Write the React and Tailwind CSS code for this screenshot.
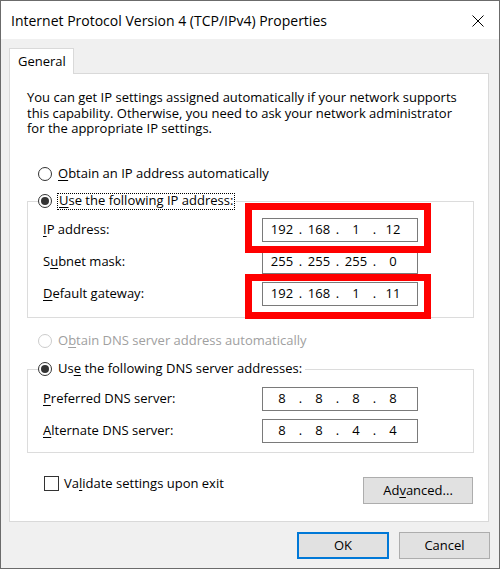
import React from "react";

const U = ({ children }) => (
  <span className="underline underline-offset-[2px] decoration-1">{children}</span>
);

function Radio({ checked, disabled }) {
  return (
    <span
      className={
        disabled
          ? "flex w-[14px] h-[14px] shrink-0 rounded-full border border-[#cccccc] bg-white items-center justify-center"
          : "flex w-[14px] h-[14px] shrink-0 rounded-full border border-[#333333] bg-white items-center justify-center"
      }
    >
      {checked && <span className="w-[8px] h-[8px] rounded-full bg-[#333333]" />}
    </span>
  );
}

function IPField({ parts }) {
  return (
    <div className="w-[156px] h-[24px] border border-[#7a7a7a] bg-white flex items-center pl-[4px] text-[13px]">
      {parts.map((p, i) => (
        <React.Fragment key={i}>
          {i > 0 && <span className="w-[7px] text-center">.</span>}
          <span className="w-[30px] text-center">{p}</span>
        </React.Fragment>
      ))}
    </div>
  );
}

function Row({ label, parts }) {
  return (
    <div className="flex items-center h-[24px]">
      <div className="w-[219px]">{label}</div>
      <IPField parts={parts} />
    </div>
  );
}

function Button({ children, primary, className }) {
  return (
    <div
      className={
        (primary
          ? "border-2 border-[#0078d7] "
          : "border border-[#adadad] ") +
        "bg-[#e1e1e1] flex items-center justify-center " +
        (className || "")
      }
    >
      {children}
    </div>
  );
}

export default function App() {
  return (
    <div
      className="relative w-[500px] h-[569px] border border-[#6b6b6b] bg-[#f0f0f0] flex flex-col text-[13px] text-black"
      style={{ fontFamily: "'Open Sans', 'Noto Sans', sans-serif" }}
    >
      {/* Title bar */}
      <div className="h-[38px] bg-white flex items-center justify-between pl-[10px] pr-[15px] shrink-0">
        <span className="text-[14px]">Internet Protocol Version 4 (TCP/IPv4) Properties</span>
        <svg width="12" height="12" viewBox="0 0 12 12" className="mt-[2px]">
          <path d="M0.5 0.5 L11.5 11.5 M11.5 0.5 L0.5 11.5" stroke="#000" strokeWidth="1" />
        </svg>
      </div>

      {/* Body */}
      <div className="pl-[8px] pt-[9px] flex flex-col">
        {/* Tab */}
        <div className="relative z-10 w-[65px] h-[26px] -mb-px bg-white border-t border-l border-r border-[#d9d9d9] flex items-center pl-[8px]">
          General
        </div>

        {/* Panel */}
        <div className="w-[480px] h-[449px] bg-white border border-[#d9d9d9] pl-[17px] flex flex-col">
          <div className="pt-[16px] leading-[15.5px] h-[63px]">
            You can get IP settings assigned automatically if your network supports
            <br />
            this capability. Otherwise, you need to ask your network administrator
            <br />
            for the appropriate IP settings.
          </div>

          <div className="mt-[27px] h-[20px] flex items-center pl-[11px] gap-[6px]">
            <Radio />
            <span>
              <U>O</U>btain an IP address automatically
            </span>
          </div>

          {/* Group 1 */}
          <div className="relative mt-[17px] w-[447px] h-[117px] border border-[#dcdcdc] pt-[16px] pl-[15px] flex flex-col gap-[8px]">
            <div className="absolute left-[10px] top-[-10px] h-[18px] bg-white flex items-center gap-[5px] pr-[1px]">
              <Radio checked />
              <span className="border border-dotted border-black px-[1px] h-[17px] flex items-center">
                <U>U</U>se the following IP address:
              </span>
            </div>
            <Row
              label={
                <>
                  <U>I</U>P address:
                </>
              }
              parts={["192", "168", "1", "12"]}
            />
            <Row
              label={
                <>
                  S<U>u</U>bnet mask:
                </>
              }
              parts={["255", "255", "255", "0"]}
            />
            <Row
              label={
                <>
                  <U>D</U>efault gateway:
                </>
              }
              parts={["192", "168", "1", "11"]}
            />
          </div>

          <div className="mt-[13px] h-[20px] flex items-center pl-[11px] gap-[6px] text-[#a0a0a0]">
            <Radio disabled />
            <span>
              O<U>b</U>tain DNS server address automatically
            </span>
          </div>

          {/* Group 2 */}
          <div className="relative mt-[18px] w-[447px] h-[84px] border border-[#dcdcdc] pt-[17px] pl-[15px] flex flex-col gap-[8px]">
            <div className="absolute left-[10px] top-[-10px] h-[18px] bg-white flex items-center gap-[6px] pr-[3px]">
              <Radio checked />
              <span>
                Us<U>e</U> the following DNS server addresses:
              </span>
            </div>
            <Row
              label={
                <>
                  <U>P</U>referred DNS server:
                </>
              }
              parts={["8", "8", "8", "8"]}
            />
            <Row
              label={
                <>
                  <U>A</U>lternate DNS server:
                </>
              }
              parts={["8", "8", "4", "4"]}
            />
          </div>

          <div className="mt-[23px] w-[446px] flex items-start justify-between">
            <div className="ml-[17px] flex items-center gap-[5px] h-[15px]">
              <span className="w-[15px] h-[15px] border border-[#333333] bg-white" />
              <span>
                Va<U>l</U>idate settings upon exit
              </span>
            </div>
            <Button className="mt-px w-[110px] h-[27px]">
              Ad<U>v</U>anced...
            </Button>
          </div>
        </div>

        {/* Bottom buttons */}
        <div className="mt-[10px] flex justify-end gap-[10px] pr-[9px]">
          <Button primary className="w-[92px] h-[27px]">
            OK
          </Button>
          <Button className="w-[91px] h-[27px]">Cancel</Button>
        </div>
      </div>

      {/* Red annotation boxes */}
      <div className="absolute left-[244px] top-[202px] w-[186px] h-[50px] border-[7px] border-[#ff0000] pointer-events-none" />
      <div className="absolute left-[244px] top-[273px] w-[186px] h-[45px] border-[7px] border-[#ff0000] pointer-events-none" />
    </div>
  );
}
